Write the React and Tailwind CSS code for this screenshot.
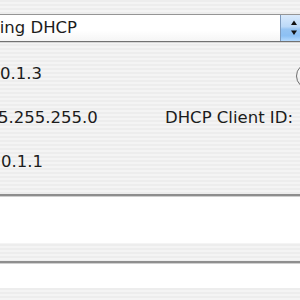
export default function App() {
  return (
    <div className="w-[300px] h-[300px] overflow-hidden flex flex-col bg-[repeating-linear-gradient(180deg,#ededed_0px,#ededed_2px,#f4f4f4_2px,#f4f4f4_4px)] font-['DejaVu_Sans',sans-serif] text-[16.5px] text-[#1c1c1c]">
      {/* popup */}
      <div className="mt-[14px] ml-[-10px] w-[316px] h-[28px] shrink-0 flex border border-[#959595] border-b-[#727272] bg-[linear-gradient(180deg,#ffffff_0%,#ffffff_60%,#f5f5f5_100%)] shadow-[0_1px_0_#d6d6d6]">
        <div className="flex-1 pl-[10px] overflow-hidden whitespace-nowrap leading-[26px]">
          <span className="ml-[-22px]">Using DHCP</span>
        </div>
        <div className="w-[25px] h-[26px] shrink-0 border-l border-[#7f9bbd] bg-[linear-gradient(180deg,#d9eafc_0%,#bcd9f8_45%,#96c4f3_55%,#8cc0f4_80%,#b5dafe_100%)]">
          <svg width="25" height="26" viewBox="0 0 25 26">
            <polygon points="13,5.5 16,10 10,10" fill="#111" />
            <polygon points="10,15.5 16,15.5 13,20" fill="#111" />
          </svg>
        </div>
      </div>

      {/* row 1 */}
      <div className="mt-[21px] h-[26px] shrink-0 flex">
        <div className="w-[296px] shrink-0 mt-[1px] leading-[20px] whitespace-nowrap">0.1.3</div>
        <div className="w-[40px] h-[26px] shrink-0 rounded-full border border-[#6f6f6f] bg-[linear-gradient(180deg,#ffffff,#e6e6e6)]" />
      </div>

      {/* row 2 */}
      <div className="mt-[19px] h-[20px] shrink-0 flex leading-[20px] whitespace-nowrap">
        <div className="w-[163px] shrink-0 ml-[-2px]">5.255.255.0</div>
        <div className="shrink-0 ml-[4px]">DHCP Client ID:</div>
      </div>

      {/* row 3 */}
      <div className="mt-[24px] h-[20px] shrink-0 leading-[20px] whitespace-nowrap pl-[1px]">0.1.1</div>

      {/* text field 1 */}
      <div className="mt-[22px] ml-[-10px] w-[320px] h-[49px] shrink-0 bg-white border-t-2 border-[#8e8e8e] shadow-[inset_0_1px_0_#cfcfcf]" />

      {/* text field 2 */}
      <div className="mt-[18px] ml-[-10px] w-[320px] h-[27px] shrink-0 bg-white border-t-2 border-[#8e8e8e] shadow-[inset_0_1px_0_#cfcfcf]" />
    </div>
  );
}
